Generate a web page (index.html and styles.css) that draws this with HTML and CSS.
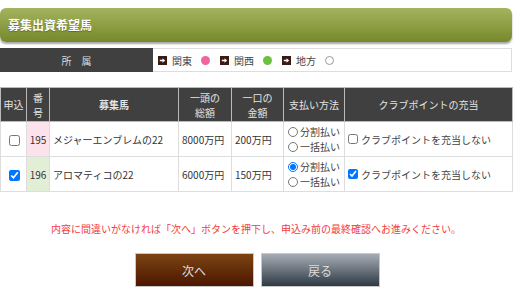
FILE: index.html
```html
<!DOCTYPE html>
<html lang="ja">
<head>
<meta charset="utf-8">
<link rel="stylesheet" href="styles.css">
</head>
<body>
<div class="page">
  <h1 class="title">募集出資希望馬</h1>

  <div class="affil">
    <div class="affil-label">所　属</div>
    <div class="affil-items">
      <span class="item"><svg class="arr" viewBox="0 0 10 10"><rect width="10" height="10" fill="#3a1a12"/><path d="M2 4.2h3V2.5l3 2.5-3 2.5V5.8H2z" fill="#fff"/></svg>関東<span class="dot pink"></span></span>
      <span class="item"><svg class="arr" viewBox="0 0 10 10"><rect width="10" height="10" fill="#3a1a12"/><path d="M2 4.2h3V2.5l3 2.5-3 2.5V5.8H2z" fill="#fff"/></svg>関西<span class="dot green"></span></span>
      <span class="item"><svg class="arr" viewBox="0 0 10 10"><rect width="10" height="10" fill="#3a1a12"/><path d="M2 4.2h3V2.5l3 2.5-3 2.5V5.8H2z" fill="#fff"/></svg>地方<span class="dot empty"></span></span>
    </div>
  </div>

  <table class="tbl">
    <colgroup>
      <col class="c1"><col class="c2"><col class="c3"><col class="c4"><col class="c5"><col class="c6"><col class="c7">
    </colgroup>
    <thead>
      <tr>
        <th>申込</th>
        <th>番<br>号</th>
        <th class="bold">募集馬</th>
        <th>一頭の<br>総額</th>
        <th>一口の<br>金額</th>
        <th>支払い方法</th>
        <th>クラブポイントの充当</th>
      </tr>
    </thead>
    <tbody>
      <tr>
        <td class="center"><input type="checkbox" class="cb"></td>
        <td class="num pinkbg">195</td>
        <td>メジャーエンブレムの22</td>
        <td>8000万円</td>
        <td>200万円</td>
        <td class="pay">
          <label class="opt"><input type="radio" name="p1" class="rd">分割払い</label>
          <label class="opt"><input type="radio" name="p1" class="rd">一括払い</label>
        </td>
        <td><label class="cp"><input type="checkbox" class="cb2">クラブポイントを充当しない</label></td>
      </tr>
      <tr>
        <td class="center"><input type="checkbox" class="cb" checked></td>
        <td class="num greenbg">196</td>
        <td>アロマティコの22</td>
        <td>6000万円</td>
        <td>150万円</td>
        <td class="pay">
          <label class="opt"><input type="radio" name="p2" class="rd" checked>分割払い</label>
          <label class="opt"><input type="radio" name="p2" class="rd">一括払い</label>
        </td>
        <td><label class="cp"><input type="checkbox" class="cb2" checked>クラブポイントを充当しない</label></td>
      </tr>
    </tbody>
  </table>

  <p class="notice">内容に間違いがなければ「次へ」ボタンを押下し、申込み前の最終確認へお進みください。</p>

  <div class="buttons">
    <button class="btn next">次へ</button>
    <button class="btn back">戻る</button>
  </div>
</div>
</body>
</html>
```

FILE: styles.css
```css
* { box-sizing: border-box; }
html, body { margin: 0; padding: 0; background: #fff; }
body {
  font-family: "Noto Sans CJK JP", "Noto Sans", sans-serif;
  color: #333;
  font-size: 10px;
}
.page {
  width: 512px;
  padding-top: 8px;
}
.title {
  margin: 0;
  height: 34px;
  line-height: 34px;
  padding-left: 8px;
  font-size: 12px;
  font-weight: bold;
  color: #fff;
  background: linear-gradient(#a4b45e, #76882a);
  border-radius: 6px;
  box-shadow: 0 2px 2px rgba(0,0,0,0.35);
  text-shadow: 0 1px 1px rgba(0,0,0,0.3);
}
.affil {
  margin-top: 6px;
  display: flex;
  height: 24px;
  border: 1px solid #ddd;
  border-left: none;
}
.affil-label {
  width: 153px;
  background: #404040;
  color: #ddd;
  display: flex;
  align-items: center;
  justify-content: center;
  font-size: 10px;
  margin-top: -1px;
  margin-bottom: -1px;
}
.affil-items {
  display: flex;
  align-items: center;
  padding-left: 5px;
  gap: 10px;
}
.item {
  display: flex;
  align-items: center;
  color: #444;
}
.arr { width: 9px; height: 9px; margin-right: 5px; }
.dot {
  width: 9px; height: 9px; border-radius: 50%;
  margin-left: 9px;
  display: inline-block;
}
.pink { background: #f0659e; }
.green { background: #6cc23e; }
.empty { border: 1px solid #999; background: #fff; }

.tbl {
  margin-top: 15px;
  width: 512px;
  border-collapse: collapse;
  table-layout: fixed;
}
.c1 { width: 26px; }
.c2 { width: 23px; }
.c3 { width: 129px; }
.c4 { width: 53px; }
.c5 { width: 52px; }
.c6 { width: 61px; }
.c7 { width: 168px; }
.tbl th {
  background: #404040;
  color: #e4e4e4;
  font-weight: normal;
  font-size: 10px;
  line-height: 15px;
  height: 34px;
  border: 1px solid #bbb;
  text-align: center;
  padding: 0;
}
.tbl th.bold { font-weight: bold; }
.tbl td {
  border: 1px solid #ddd;
  height: 35px;
  padding: 0 2px 0 3px;
  font-size: 10px;
  white-space: nowrap;
}
.center { text-align: center; }
.num { text-align: center; padding: 0 !important; }
.pinkbg { background: #fce2ea; }
.greenbg { background: #e2efd6; }
.cb { width: 11px; height: 11px; margin: 0; vertical-align: middle; }
.pay { padding: 0 0 0 4px !important; }
.opt {
  display: flex;
  align-items: center;
  line-height: 15px;
  color: #444;
}
.rd { width: 10px; height: 10px; margin: 0 2px 0 0; }
.cp { display: flex; align-items: center; color: #444; }
.cb2 { width: 10px; height: 10px; margin: 0 3px 0 0; }

.notice {
  margin: 30px 0 0;
  text-align: center;
  color: #f43b3b;
  font-size: 10px;
  line-height: 14px;
}
.buttons {
  margin-top: 17px;
  display: flex;
  justify-content: center;
  gap: 7px;
  padding-left: 2px;
}
.btn {
  width: 119px;
  height: 34px;
  font-family: inherit;
  font-size: 12px;
  color: #ddd;
  border: 1px solid #c8c8c8;
  padding: 0;
}
.next { background: linear-gradient(#7c4413, #4b1600); }
.back { background: linear-gradient(#a6acb4, #2f3a44); }
```
